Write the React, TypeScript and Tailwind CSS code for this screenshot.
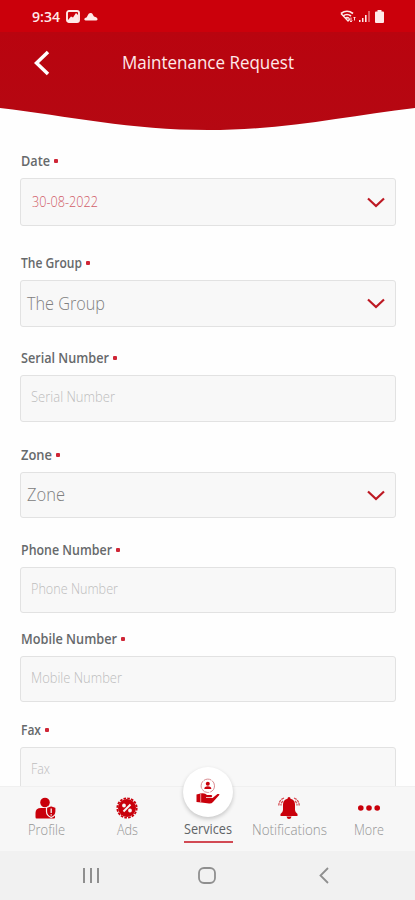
import type { ReactNode } from "react";

type Field = {
  label: string;
  text: string;
  kind: "date" | "select" | "input";
  gap: string;
  height: string;
};

const fields: Field[] = [
  { label: "Date", text: "30-08-2022", kind: "date", gap: "mt-[21px]", height: "h-12" },
  { label: "The Group", text: "The Group", kind: "select", gap: "mt-7", height: "h-[47px]" },
  { label: "Serial Number", text: "Serial Number", kind: "input", gap: "mt-[22px]", height: "h-[47px]" },
  { label: "Zone", text: "Zone", kind: "select", gap: "mt-6", height: "h-[46px]" },
  { label: "Phone Number", text: "Phone Number", kind: "input", gap: "mt-[23px]", height: "h-[46px]" },
  { label: "Mobile Number", text: "Mobile Number", kind: "input", gap: "mt-[17px]", height: "h-[46px]" },
  { label: "Fax", text: "Fax", kind: "input", gap: "mt-[19px]", height: "h-[46px]" },
];

const textStyles = {
  date: "pl-[11px] text-[#d15d69] text-[14px]",
  select: "pl-[6px] pt-[2px] text-[#808080] text-[18px]",
  input: "pl-[10px] pb-[3px] text-[#bdbdbd] text-[14px]",
};

// Width the label and value text take, in px
const labelWidths: Record<string, number> = {
  Date: 29,
  "The Group": 61,
  "Serial Number": 88,
  Zone: 31,
  "Phone Number": 91,
  "Mobile Number": 96,
  Fax: 20,
};

const valueWidths: Record<string, number> = {
  "30-08-2022": 66,
  "The Group": 78,
  "Serial Number": 84,
  Zone: 38,
  "Phone Number": 87,
  "Mobile Number": 91,
  Fax: 19,
};

function FitText({ width, children }: { width: number; children: string }) {
  return (
    <svg width={width} height="24" className="block shrink-0 overflow-visible">
      <text x="0" y="17" fill="currentColor" textLength={width} lengthAdjust="spacingAndGlyphs">
        {children}
      </text>
    </svg>
  );
}

export default function App() {
  return (
    <div className="flex h-[900px] w-[415px] flex-col overflow-hidden bg-[#fefefe] font-['Open_Sans','Noto_Sans',sans-serif]">
      <StatusBar />
      <Header />
      <main className="min-h-0 flex-1 overflow-hidden px-5">
        {fields.map((field) => (
          <FormField key={field.label} field={field} />
        ))}
      </main>
      <TabBar />
      <SystemNav />
    </div>
  );
}

function StatusBar() {
  return (
    <div className="flex h-8 shrink-0 items-center bg-[#cb000b] pl-8 pr-[31px] text-[#ffe9e9]">
      <span className="pt-px text-[15px] font-semibold">
        <FitText width={28}>9:34</FitText>
      </span>
      <svg width="14" height="13" viewBox="0 0 14 13" className="ml-[6px]">
        <rect x="1" y="1" width="12" height="11" rx="2" fill="none" stroke="currentColor" strokeWidth="1.9" />
        <path d="M2 10l3-3.500 2 1 3-4.500 2 2v6H2z" fill="currentColor" />
      </svg>
      <svg width="14" height="9" viewBox="0 0 14 9" className="ml-1">
        <path d="M1.500 8.500C-.5 8 0 6 2.500 5.500 3.500 4.500 4 1 6.500 1S9 3.500 10 4.500c2 .5 3.500 1.500 3.500 2.700S12.500 8.500 11.500 8.500z" fill="currentColor" />
      </svg>
      <div className="ml-auto flex items-center">
        <svg width="16" height="14" viewBox="0 0 16 14" fill="none" stroke="currentColor">
          <path d="M1 4.500Q7 0 13 4.500M3 7q4-3 8 0M5.300 9.300q1.800-1.300 3.600 0" strokeWidth="1.700" />
          <path d="M1 4.500l7 7.500 2-2.500" strokeWidth="1.300" />
          <path d="M11 8.500v4.500m-1.300-1.500L11 13l1.300-1.500M14.500 11.500V8m-1 1l1-1 1 1" strokeWidth=".9" />
        </svg>
        <svg width="12" height="13" viewBox="0 0 12 13" fill="currentColor" className="ml-[3px]">
          <path d="M0 10h1.500v2H0zM3 8h1.500v4H3zM6 5h1.600v7H6z" />
          <path d="M9 1h2v11H9z" opacity=".4" />
        </svg>
        <svg width="9" height="13" viewBox="0 0 9 13" fill="currentColor" className="ml-1">
          <path d="M2.500 0h4v1.500H8q1 0 1 1V12q0 1-1 1H1q-1 0-1-1V2.500q0-1 1-1h1.500z" />
        </svg>
      </div>
    </div>
  );
}

function Header() {
  return (
    <header className="relative h-[99px] shrink-0 text-white">
      <svg width="415" height="99" className="absolute inset-0">
        <defs>
          <linearGradient id="header" x1="0" y1="0" x2="0" y2="1">
            <stop stopColor="#b9040f" />
            <stop offset="1" stopColor="#b50812" />
          </linearGradient>
        </defs>
        <path d="M0 0H415V76C347 84 285 98 208 98S68 84 0 76Z" fill="url(#header)" />
      </svg>
      <div className="relative flex h-[62px] items-center pl-[34px]">
        <svg width="16" height="26" viewBox="0 0 16 26" fill="none" stroke="currentColor" strokeWidth="3.500">
          <path d="M14 2L2.500 13 14 24" />
        </svg>
        <h1 className="ml-[72px] pt-px text-[18px] text-[#ffe9e9]">
          <FitText width={172}>Maintenance Request</FitText>
        </h1>
      </div>
    </header>
  );
}

function FormField({ field }: { field: Field }) {
  return (
    <div className={field.gap}>
      <div className="flex h-[18px] items-center pl-px text-[14px] font-semibold text-[#66696b]">
        <FitText width={labelWidths[field.label]}>{field.label}</FitText>
        <span className="ml-[4px] size-1 rounded-[1px] bg-[#cf2636]" />
      </div>
      <div
        className={`mt-2 flex w-[376px] items-center rounded-[3px] border-[1.5px] border-[#e2e2e2] bg-[#f8f8f8] pr-[10px] ${field.height}`}
      >
        <span className={`font-light ${textStyles[field.kind]}`}>
          <FitText width={valueWidths[field.text]}>{field.text}</FitText>
        </span>
        {field.kind !== "input" && (
          <svg width="18" height="11" viewBox="0 0 18 11" className="ml-auto" fill="none" stroke="#bd1923" strokeWidth="2.200">
            <path d="M1 1.500l8 7.500 8-7.500" />
          </svg>
        )}
      </div>
    </div>
  );
}

function TabBar() {
  return (
    <nav className="relative flex h-[65px] shrink-0 border-t border-[#f0f0f0] bg-[#f7f7f7]">
      <Tab label="Profile" width={37} className="ml-1 w-[84px]">
        <svg width="22" height="22" viewBox="0 0 22 22" fill="#c9000b">
          <circle cx="10" cy="5.500" r="4.800" />
          <path d="M.5 20v-4q0-5 5.500-5h8q6 0 6 6v3.500q0 1-1 1H1.500q-1 0-1-1.500z" />
          <path d="M11.500 10.500l4.700-1.700 4.800 1.700v4q0 4-4.800 6-4.700-2-4.700-6z" stroke="#f7f7f7" strokeWidth="1.200" />
          <path d="M16.200 11.500v4.500m0 1.200v1.200" stroke="#f7f7f7" strokeWidth="1.300" />
        </svg>
      </Tab>
      <Tab label="Ads" width={21} className="w-[78px]">
        <svg width="22" height="22" viewBox="0 0 22 22" fill="none">
          <circle cx="11" cy="11" r="9" fill="#c9000b" />
          <circle cx="11" cy="11" r="9.700" stroke="#c9000b" strokeWidth="1.800" strokeDasharray="2.600 1.209" />
          <g stroke="#f7f7f7" strokeWidth="2">
            <path d="M7.500 14.500l7-7" />
            <circle cx="8" cy="8.500" r=".9" />
            <circle cx="14" cy="13.500" r=".9" />
          </g>
        </svg>
      </Tab>
      <div className="flex w-[84px] flex-col items-center pt-[30px]">
        <div className="flex h-[26px] w-[49px] items-start justify-center border-b-2 border-[#d24a54] text-[14px] font-medium text-[#606366]">
          <FitText width={48}>Services</FitText>
        </div>
      </div>
      <Tab label="Notifications" width={75} className="w-[78px]">
        <svg width="22" height="22" viewBox="0 0 22 22" fill="none" stroke="#c9000b">
          <path d="M11 0q1.500 0 1.500 1.800Q17 3 17 7.500V13q0 2 2.500 4v2h-17v-2Q5 15 5 13V7.500Q5 3 9.500 1.800 9.500 0 11 0z" fill="#c9000b" stroke="none" />
          <path d="M8.500 19.500h5q-.5 2.500-2.500 2.500t-2.500-2.500z" fill="#c9000b" stroke="none" />
          <path d="M6 1Q1 3 .8 8.500M5 4Q3 5.500 3 8.500M16 1q5 2 5.200 7.500M17 4q2 1.500 2 4.500" strokeWidth="1.300" strokeDasharray="3 .7" opacity=".7" />
        </svg>
      </Tab>
      <Tab label="More" width={30} className="-ml-px w-[84px]">
        <svg width="22" height="22" viewBox="0 0 22 22" fill="#c9000b">
          <circle cx="2.800" cy="11" r="2.800" />
          <circle cx="11" cy="11" r="2.800" />
          <circle cx="19.200" cy="11" r="2.800" />
        </svg>
      </Tab>
      <div className="absolute left-[183px] top-[-20px] flex size-[50px] items-center justify-center rounded-full bg-white shadow-[0_2px_4px_#0003]">
        <svg width="26" height="28" viewBox="0 0 26 28" fill="#c9000b">
          <circle cx="12.800" cy="7.800" r="6.700" fill="none" stroke="#d98b91" strokeDasharray="8 1" />
          <circle cx="12.800" cy="5.700" r="2" />
          <path d="M9.300 11q0-2.700 3.500-2.700t3.500 2.700z" />
          <path d="M1.500 16.500l4-1Q10 14.500 12 17h4.500q1.500 1 0 2.300H11v.8h6.500l5-4q2-.5 2 .7L18 24q-1.500 1.800-4 1.500L6.500 24.500 1.500 24z" />
          <path d="M5.700 16v8" stroke="#fff" strokeWidth=".6" />
        </svg>
      </div>
    </nav>
  );
}

function Tab({
  label,
  width,
  className,
  children,
}: {
  label: string;
  width: number;
  className: string;
  children: ReactNode;
}) {
  return (
    <div className={`flex flex-col items-center pt-[10px] text-[14px] font-light text-[#949494] ${className}`}>
      {children}
      <div className="-mt-px">
        <FitText width={width}>{label}</FitText>
      </div>
    </div>
  );
}

function SystemNav() {
  return (
    <div className="flex h-[49px] shrink-0 items-center bg-[#f1f1f1] text-[#8f8f8f]">
      <svg width="16" height="17" viewBox="0 0 16 17" className="ml-[83px]" stroke="currentColor" strokeWidth="2">
        <path d="M1 1v15M8 1v15M15 1v15" />
      </svg>
      <svg width="18" height="17" viewBox="0 0 18 17" className="ml-[99px]" fill="none" stroke="currentColor" strokeWidth="1.800">
        <rect x="1" y="1" width="16" height="15" rx="5" />
      </svg>
      <svg width="10" height="17" viewBox="0 0 10 17" className="ml-[103px]" fill="none" stroke="currentColor" strokeWidth="1.800">
        <path d="M9 1L1.500 8.500 9 16" />
      </svg>
    </div>
  );
}
